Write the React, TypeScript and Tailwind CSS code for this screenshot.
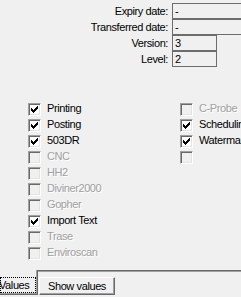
import React from "react";

const FONT = "font-['Liberation_Sans',Arial,sans-serif]";

type Item = { label: string; checked: boolean; enabled: boolean };

const LEFT: Item[] = [
  { label: "Printing", checked: true, enabled: true },
  { label: "Posting", checked: true, enabled: true },
  { label: "503DR", checked: true, enabled: true },
  { label: "CNC", checked: false, enabled: false },
  { label: "HH2", checked: false, enabled: false },
  { label: "Diviner2000", checked: false, enabled: false },
  { label: "Gopher", checked: false, enabled: false },
  { label: "Import Text", checked: true, enabled: true },
  { label: "Trase", checked: false, enabled: false },
  { label: "Enviroscan", checked: false, enabled: false },
];

const RIGHT: Item[] = [
  { label: "C-Probe", checked: false, enabled: false },
  { label: "Scheduling", checked: true, enabled: true },
  { label: "Watermark", checked: true, enabled: true },
  { label: "", checked: false, enabled: false },
];

// classic 7x7 tick, one rect per pixel run
const TICK: [number, number, number][] = [
  [6, 0, 1],
  [5, 1, 2],
  [0, 2, 1],
  [4, 2, 3],
  [0, 3, 2],
  [3, 3, 3],
  [0, 4, 5],
  [1, 5, 3],
  [2, 6, 1],
];

function CheckBox({ checked, enabled }: { checked: boolean; enabled: boolean }) {
  return (
    <div
      className={`mt-px w-[13px] h-[13px] shrink-0 border border-t-[#a0a0a0] border-l-[#a0a0a0] border-b-white border-r-white shadow-[inset_1px_1px_0_#696969,inset_-1px_-1px_0_#e3e3e3] ${
        enabled ? "bg-white" : "bg-[#f0f0f0]"
      }`}
    >
      {checked && (
        <svg width="11" height="11" viewBox="0 0 11 11" shapeRendering="crispEdges">
          {TICK.map(([x, y, w], i) => (
            <rect key={i} x={x + 2} y={y + 2} width={w} height={1} fill="#000" />
          ))}
        </svg>
      )}
    </div>
  );
}

function CheckRow({ item }: { item: Item }) {
  return (
    <div className="flex items-start h-4 whitespace-nowrap">
      <CheckBox checked={item.checked} enabled={item.enabled} />
      <span
        className={`ml-[6px] leading-[13px] ${
          item.enabled ? "text-black" : "text-[#a0a0a0] [text-shadow:1px_1px_0_#fff]"
        }`}
      >
        {item.label}
      </span>
    </div>
  );
}

function Field({ label, value, wide }: { label: string; value: string; wide?: boolean }) {
  return (
    <div className="flex items-start h-4">
      <div className="w-[168px] text-right leading-4 whitespace-nowrap">{label}</div>
      <div
        className={`ml-[4px] h-4 border border-[#6d6d6d] pl-[2px] leading-[14px] ${
          wide ? "flex-1 border-r-0" : "w-[45px]"
        }`}
      >
        {value}
      </div>
    </div>
  );
}

export default function App() {
  return (
    <div
      className={`w-[241px] h-[297px] overflow-hidden bg-[#f0f0f0] text-[11px] tracking-[-0.4px] text-black ${FONT} flex flex-col`}
    >
      {/* fields */}
      <div className="h-[270px] flex flex-col">
        <div className="pt-[3px] flex flex-col">
          <Field label="Expiry date:" value="-" wide />
          <Field label="Transferred date:" value="-" wide />
          <Field label="Version:" value="3" />
          <Field label="Level:" value="2" />
        </div>

        {/* options */}
        <div className="mt-[35px] flex">
          <div className="w-[180px] pl-[28px] flex flex-col">
            {LEFT.map((it) => (
              <CheckRow key={it.label} item={it} />
            ))}
          </div>
          <div className="flex-1 flex flex-col overflow-hidden">
            {RIGHT.map((it, i) => (
              <CheckRow key={i} item={it} />
            ))}
          </div>
        </div>
      </div>

      {/* bottom tabs */}
      <div className="flex items-start h-[27px]">
        <div className="relative w-[38px] h-[25px] border-r border-b border-[#696969] shadow-[inset_-1px_-1px_0_#a0a0a0]">
          <div className="absolute left-0 top-[7px] w-[36px] h-[16px] border border-dotted border-black" />
          <span className="absolute left-[-1px] top-[9px] leading-[13px]">Values</span>
        </div>
        <div className="flex-1 h-[25px] flex items-start border-t border-[#696969] shadow-[inset_0_1px_0_#a0a0a0]">
          <div className="ml-px mt-[6px] h-[18px] px-[8px] border border-t-white border-l-white border-r-[#696969] border-b-[#696969] shadow-[inset_-1px_-1px_0_#a0a0a0] leading-[14px] whitespace-nowrap pt-[1px]">
            Show values
          </div>
        </div>
      </div>
    </div>
  );
}
